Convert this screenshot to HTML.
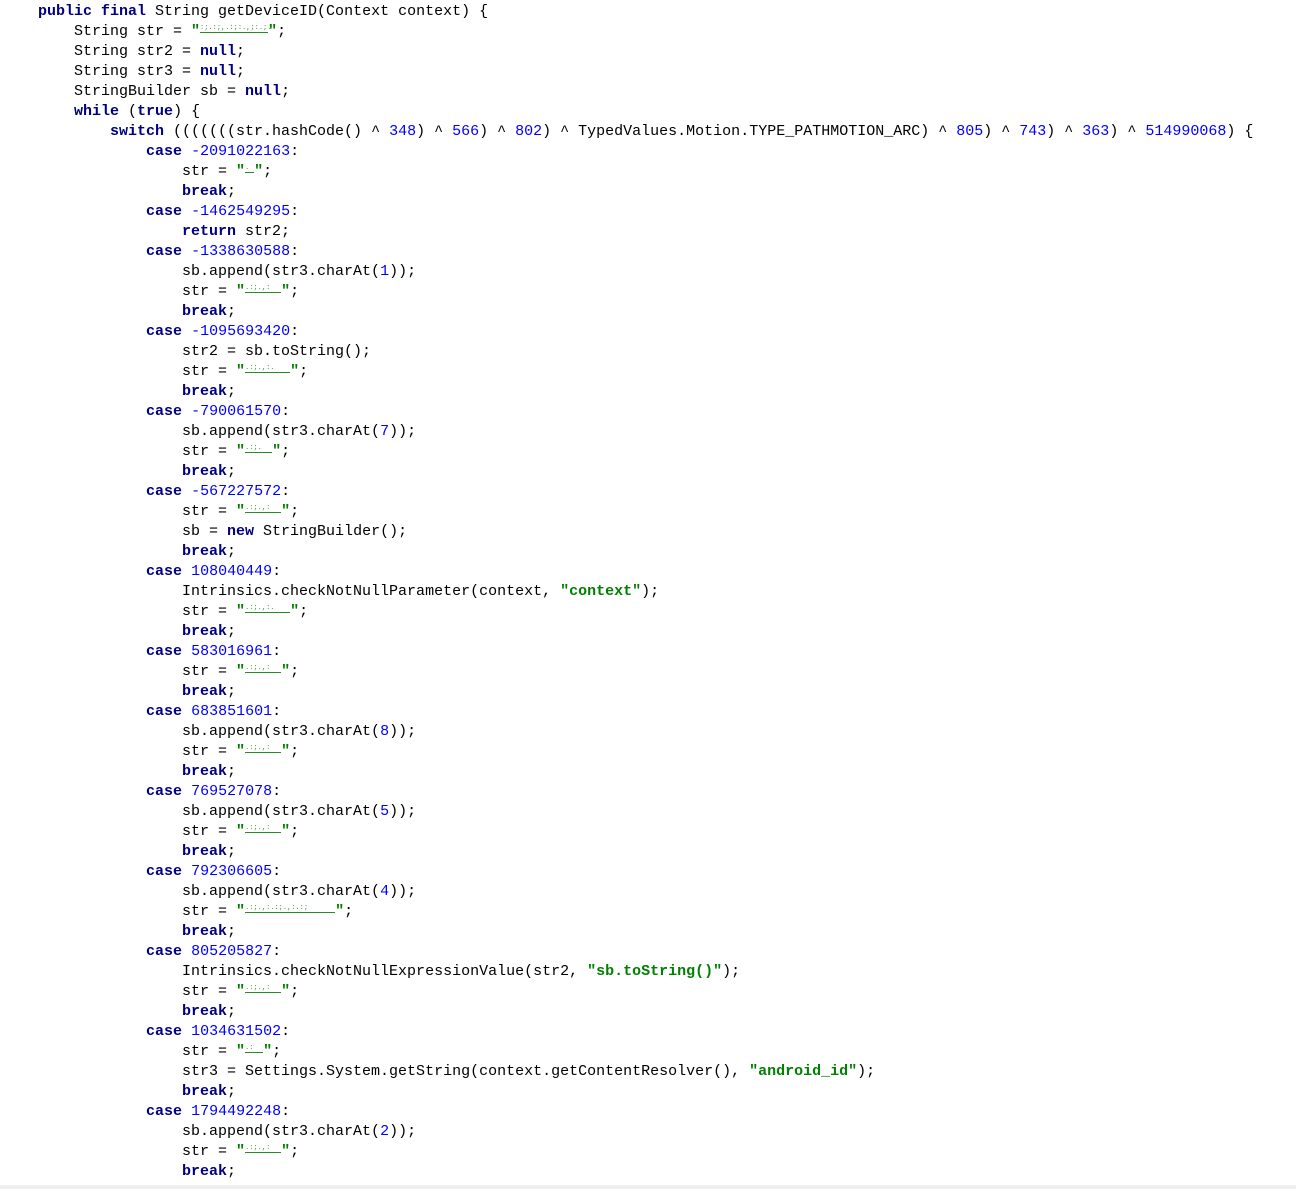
<!DOCTYPE html>
<html><head><meta charset="utf-8"><style>
html,body{margin:0;padding:0;background:#fff;width:1296px;height:1189px;overflow:hidden;position:relative}
pre{margin:0;position:absolute;left:38px;top:2px;font-family:"Liberation Mono",monospace;font-size:15px;line-height:20px;color:#000}
.k{color:#000080;font-weight:bold}
.n{color:#0000ff}
.s{color:#008000;font-weight:bold}
.z{color:#3a9a3a;font-weight:normal;font-size:7px;letter-spacing:0;display:inline-block;border-bottom:1px solid #2a8a2a;line-height:8px;vertical-align:6px}
.bar{position:absolute;left:0;top:1185px;width:1296px;height:4px;background:#eeeeee}
</style></head><body>
<pre><span class="k">public final</span> String getDeviceID(Context context) {
    String str = <span class="s">"<span class="z" style="width:68px">:;.:;,.:;:.,;:.;.</span>"</span>;
    String str2 = <span class="k">null</span>;
    String str3 = <span class="k">null</span>;
    StringBuilder sb = <span class="k">null</span>;
    <span class="k">while</span> (<span class="k">true</span>) {
        <span class="k">switch</span> (((((((str.hashCode() ^ <span class="n">348</span>) ^ <span class="n">566</span>) ^ <span class="n">802</span>) ^ TypedValues.Motion.TYPE_PATHMOTION_ARC) ^ <span class="n">805</span>) ^ <span class="n">743</span>) ^ <span class="n">363</span>) ^ <span class="n">514990068</span>) {
            <span class="k">case</span> <span class="n">-2091022163</span>:
                str = <span class="s">"<span class="z" style="width:9px">.</span>"</span>;
                <span class="k">break</span>;
            <span class="k">case</span> <span class="n">-1462549295</span>:
                <span class="k">return</span> str2;
            <span class="k">case</span> <span class="n">-1338630588</span>:
                sb.append(str3.charAt(<span class="n">1</span>));
                str = <span class="s">"<span class="z" style="width:36px">.:;.,:</span>"</span>;
                <span class="k">break</span>;
            <span class="k">case</span> <span class="n">-1095693420</span>:
                str2 = sb.toString();
                str = <span class="s">"<span class="z" style="width:45px">.:;.,:.</span>"</span>;
                <span class="k">break</span>;
            <span class="k">case</span> <span class="n">-790061570</span>:
                sb.append(str3.charAt(<span class="n">7</span>));
                str = <span class="s">"<span class="z" style="width:27px">.:;.</span>"</span>;
                <span class="k">break</span>;
            <span class="k">case</span> <span class="n">-567227572</span>:
                str = <span class="s">"<span class="z" style="width:36px">.:;.,:</span>"</span>;
                sb = <span class="k">new</span> StringBuilder();
                <span class="k">break</span>;
            <span class="k">case</span> <span class="n">108040449</span>:
                Intrinsics.checkNotNullParameter(context, <span class="s">"context"</span>);
                str = <span class="s">"<span class="z" style="width:45px">.:;.,:.</span>"</span>;
                <span class="k">break</span>;
            <span class="k">case</span> <span class="n">583016961</span>:
                str = <span class="s">"<span class="z" style="width:36px">.:;.,:</span>"</span>;
                <span class="k">break</span>;
            <span class="k">case</span> <span class="n">683851601</span>:
                sb.append(str3.charAt(<span class="n">8</span>));
                str = <span class="s">"<span class="z" style="width:36px">.:;.,:</span>"</span>;
                <span class="k">break</span>;
            <span class="k">case</span> <span class="n">769527078</span>:
                sb.append(str3.charAt(<span class="n">5</span>));
                str = <span class="s">"<span class="z" style="width:36px">.:;.,:</span>"</span>;
                <span class="k">break</span>;
            <span class="k">case</span> <span class="n">792306605</span>:
                sb.append(str3.charAt(<span class="n">4</span>));
                str = <span class="s">"<span class="z" style="width:90px">.:;.,:.:;.,:.:;</span>"</span>;
                <span class="k">break</span>;
            <span class="k">case</span> <span class="n">805205827</span>:
                Intrinsics.checkNotNullExpressionValue(str2, <span class="s">"sb.toString()"</span>);
                str = <span class="s">"<span class="z" style="width:36px">.:;.,:</span>"</span>;
                <span class="k">break</span>;
            <span class="k">case</span> <span class="n">1034631502</span>:
                str = <span class="s">"<span class="z" style="width:18px">.:</span>"</span>;
                str3 = Settings.System.getString(context.getContentResolver(), <span class="s">"android_id"</span>);
                <span class="k">break</span>;
            <span class="k">case</span> <span class="n">1794492248</span>:
                sb.append(str3.charAt(<span class="n">2</span>));
                str = <span class="s">"<span class="z" style="width:36px">.:;.,:</span>"</span>;
                <span class="k">break</span>;</pre>
<div class="bar"></div>
</body></html>
